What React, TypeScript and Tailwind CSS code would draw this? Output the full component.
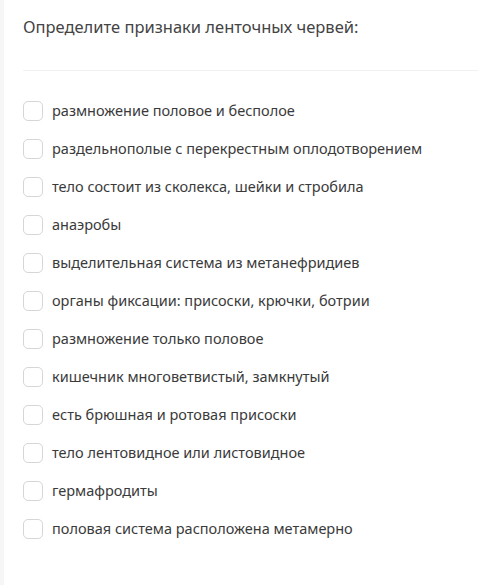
const items = [
  "размножение половое и бесполое",
  "раздельнополые с перекрестным оплодотворением",
  "тело состоит из сколекса, шейки и стробила",
  "анаэробы",
  "выделительная система из метанефридиев",
  "органы фиксации: присоски, крючки, ботрии",
  "размножение только половое",
  "кишечник многоветвистый, замкнутый",
  "есть брюшная и ротовая присоски",
  "тело лентовидное или листовидное",
  "гермафродиты",
  "половая система расположена метамерно",
];

export default function App() {
  return (
    <div className="flex w-[478px] h-[585px] bg-white" style={{ fontFamily: '"Noto Sans", sans-serif' }}>
      <div className="w-[4px] bg-[#f6f6f6]" />
      <div className="flex-1 pl-[19px]">
        <div className="pt-[15px] h-[70px] text-[16.5px] leading-[24px] text-[#444]">
          Определите признаки ленточных червей:
        </div>
        <div className="h-px bg-[#f1f1f1]" />
        <div className="mt-[21px] flex flex-col">
          {items.map((t) => (
            <label key={t} className="flex items-center h-[38px]">
              <span className="w-[20px] h-[20px] rounded-[5px] border border-[#d6d6d6] bg-white shrink-0" />
              <span className="ml-[9px] text-[14.5px] text-[#3a3a3a]">{t}</span>
            </label>
          ))}
        </div>
      </div>
    </div>
  );
}
